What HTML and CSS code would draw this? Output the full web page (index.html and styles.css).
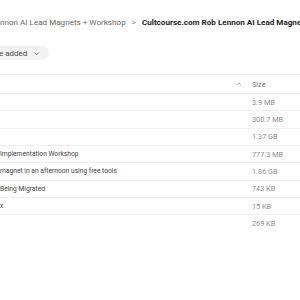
FILE: index.html
```html
<!DOCTYPE html>
<html>
<head>
<meta charset="utf-8">
<link rel="stylesheet" href="styles.css">
</head>
<body>
<div class="page">
  <div class="crumbs">
    <span class="crumb">nnon AI Lead Magnets + Workshop</span>
    <span class="sep">&gt;</span>
    <span class="crumb current">Cultcourse.com Rob Lennon AI Lead Magnets + Workshop</span>
  </div>
  <div class="filters">
    <button class="chip">e added <svg class="chev" viewBox="0 0 8 8" width="7" height="7"><path d="M1.5 3 L4 5.5 L6.5 3" fill="none" stroke="#777" stroke-width="1"/></svg></button>
  </div>
  <div class="table">
    <div class="row head">
      <div class="name"></div>
      <div class="sort"><svg viewBox="0 0 8 8" width="6" height="6"><path d="M2 5 L4 3 L6 5" fill="none" stroke="#666" stroke-width="1"/></svg></div>
      <div class="size">Size</div>
    </div>
    <div class="row"><div class="name"></div><div class="sort"></div><div class="size">3.9 MB</div></div>
    <div class="row"><div class="name"></div><div class="sort"></div><div class="size">300.7 MB</div></div>
    <div class="row"><div class="name"></div><div class="sort"></div><div class="size">1.37 GB</div></div>
    <div class="row"><div class="name">Implementation Workshop</div><div class="sort"></div><div class="size">777.3 MB</div></div>
    <div class="row"><div class="name">magnet in an afternoon using free tools</div><div class="sort"></div><div class="size">1.86 GB</div></div>
    <div class="row"><div class="name">Being Migrated</div><div class="sort"></div><div class="size">743 KB</div></div>
    <div class="row"><div class="name">x</div><div class="sort"></div><div class="size">15 KB</div></div>
    <div class="row last"><div class="name"></div><div class="sort"></div><div class="size">269 KB</div></div>
  </div>
</div>
</body>
</html>
```
FILE: styles.css
```css
html, body {
  margin: 0;
  padding: 0;
  background: #ffffff;
}
body {
  width: 300px;
  height: 300px;
  overflow: hidden;
  font-family: Roboto, "Noto Sans", "Liberation Sans", sans-serif;
}
.page {
  width: 300px;
}
.crumbs {
  display: flex;
  align-items: center;
  height: 16px;
  margin-top: 14px;
  white-space: nowrap;
  overflow: hidden;
  font-size: 8.1px;
  color: #666666;
}
.sep {
  margin: 0 6px 0 6px;
  color: #8a8a8a;
}
.current {
  font-weight: 700;
  color: #1e1e1e;
}
.filters {
  display: flex;
  margin-top: 16px;
  margin-left: -17px;
}
.chip {
  display: flex;
  align-items: center;
  gap: 6px;
  height: 14px;
  padding: 0 9px 0 16px;
  border: none;
  border-radius: 7px;
  background: #f2f2f2;
  font-family: inherit;
  font-size: 8px;
  color: #4a4a4a;
}
.chev { display: block; }
.table {
  margin-top: 14px;
  border-top: 1px solid #eceef2;
}
.row {
  display: flex;
  align-items: center;
  height: 16.33px;
  border-bottom: 1px solid #efefef;
  font-size: 7px;
}
.row.last { border-bottom: none; }
.row.head { height: 18px; }
.name {
  flex: 1;
  color: #444444;
  white-space: nowrap;
  overflow: hidden;
  font-size: 6.7px;
}
.sort {
  width: 17px;
  display: flex;
  justify-content: flex-start;
  align-items: center;
}
.sort svg { display: block; margin-left: 1px; }
.size {
  width: 48px;
  color: #8f8f8f;
  white-space: nowrap;
  font-size: 7.3px;
}
.head .size { color: #7a7a7a; }
```
